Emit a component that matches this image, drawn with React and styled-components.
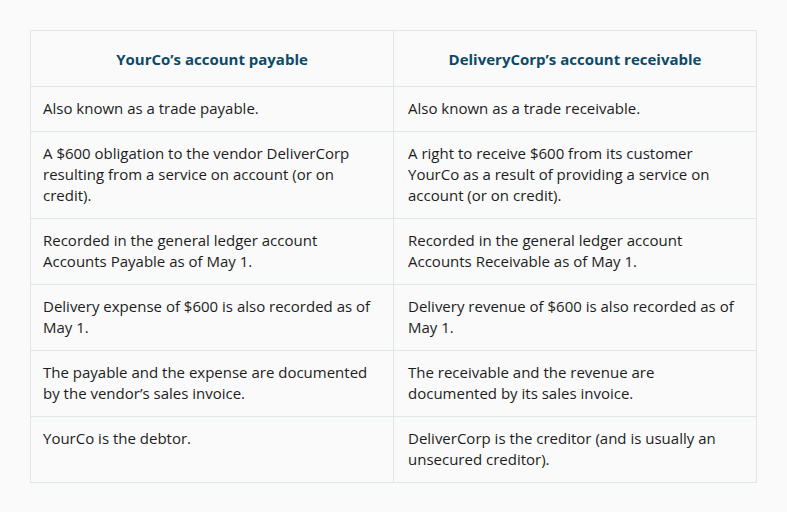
import React from "react";
import styled, { createGlobalStyle } from "styled-components";

const GlobalStyle = createGlobalStyle`
  html, body {
    margin: 0;
    background: #fafafa;
  }
  body {
    font-family: "Open Sans", "Liberation Sans", sans-serif;
  }
`;

const Page = styled.div`
  padding: 30px;
`;

const Table = styled.table`
  width: 727px;
  border-collapse: collapse;
  table-layout: fixed;
  background: #fafafa;
  border: 1px solid #dfe6ea;
`;

const Head = styled.th`
  height: 55px;
  padding: 0 12px;
  font-size: 15px;
  font-weight: 700;
  color: #0c4a68;
  text-align: center;
  vertical-align: middle;
  border: 1px solid #dfe6ea;
`;

const Cell = styled.td`
  padding: 11px ${(p) => (p.$right ? "14px" : "12px")} 12px;
  font-size: 15px;
  line-height: 21px;
  color: #1d1d1d;
  vertical-align: top;
  border: 1px solid #dfe6ea;
`;

const rows = [
  ["Also known as a trade payable.", "Also known as a trade receivable."],
  [
    "A $600 obligation to the vendor DeliverCorp resulting from a service on account (or on credit).",
    "A right to receive $600 from its customer YourCo as a result of providing a service on account (or on credit).",
  ],
  [
    "Recorded in the general ledger account Accounts Payable as of May 1.",
    "Recorded in the general ledger account Accounts Receivable as of May 1.",
  ],
  [
    "Delivery expense of $600 is also recorded as of May 1.",
    "Delivery revenue of $600 is also recorded as of May 1.",
  ],
  [
    "The payable and the expense are documented by the vendor’s sales invoice.",
    "The receivable and the revenue are documented by its sales invoice.",
  ],
  [
    "YourCo is the debtor.",
    "DeliverCorp is the creditor (and is usually an unsecured creditor).",
  ],
];

export default function App() {
  return (
    <>
      <GlobalStyle />
      <Page>
        <Table>
          <thead>
            <tr>
              <Head>YourCo’s account payable</Head>
              <Head>DeliveryCorp’s account receivable</Head>
            </tr>
          </thead>
          <tbody>
            {rows.map((r, i) => (
              <tr key={i}>
                <Cell>{r[0]}</Cell>
                <Cell $right>{r[1]}</Cell>
              </tr>
            ))}
          </tbody>
        </Table>
      </Page>
    </>
  );
}
